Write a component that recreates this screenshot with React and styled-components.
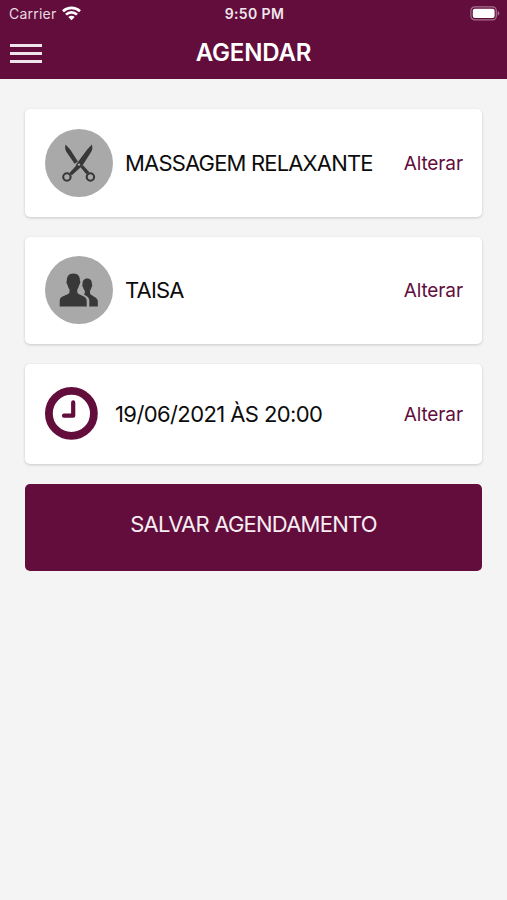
import React from 'react';
import styled, { createGlobalStyle } from 'styled-components';

const GlobalStyle = createGlobalStyle`
  body {
    margin: 0;
    background: #f4f4f4;
    font-family: Inter, 'Liberation Sans', sans-serif;
  }
`;

const Screen = styled.div`
  min-height: 100vh;
  background: #f4f4f4;
`;

const Header = styled.header`
  height: 79px;
  background: #620d3c;
  color: #fff;
`;

const StatusBar = styled.div`
  display: grid;
  grid-template-columns: 1fr auto 1fr;
  align-items: center;
  box-sizing: border-box;
  height: 27px;
  padding: 0 7px 0 9px;
  font-size: 14px;
  line-height: 27px;
`;

const Carrier = styled.div`
  display: flex;
  align-items: center;
  gap: 6px;
  color: #e8d9e1;
  letter-spacing: 0.22px;
`;

const Time = styled.div`
  font-size: 14px;
  font-weight: 600;
  color: #f1e6ec;
  letter-spacing: 0.4px;
`;

const Battery = styled.div`
  display: flex;
  justify-content: flex-end;
`;

const NavBar = styled.div`
  display: grid;
  grid-template-columns: 1fr auto 1fr;
  align-items: center;
  height: 52px;
  padding: 0 10px;
`;

const MenuButton = styled.button`
  display: flex;
  flex-direction: column;
  gap: 5px;
  width: 32px;
  padding: 0;
  border: 0;
  background: none;
`;

const MenuLine = styled.span`
  height: 3px;
  background: #f0e4eb;
`;

const Title = styled.h1`
  margin: 0;
  font-size: 24px;
  font-weight: 600;
  line-height: 30px;
  letter-spacing: -0.15px;
`;

const Content = styled.main`
  display: flex;
  flex-direction: column;
  gap: 19.5px;
  padding: 30px 25px;
`;

const Card = styled.section`
  display: flex;
  align-items: center;
  box-sizing: border-box;
  height: ${(props) => props.$height}px;
  padding: 0 19px 0 20px;
  border-radius: 5px;
  background: #fff;
  box-shadow: 0 1px 3px rgba(0, 0, 0, 0.18);
`;

const Avatar = styled.div`
  width: 68px;
  height: 68px;
  border-radius: 50%;
  background: #a9a9a9;
`;

const Label = styled.div`
  flex: 1;
  margin-left: ${(props) => props.$gap}px;
  font-size: 22px;
  line-height: 28px;
  letter-spacing: ${(props) => props.$spacing}px;
  white-space: nowrap;
  color: #0c0c0c;
`;

const ChangeLink = styled.button`
  padding: 2px 0 0;
  border: 0;
  background: none;
  font-family: inherit;
  font-size: 19px;
  line-height: 24px;
  letter-spacing: -0.1px;
  color: #620d3c;
`;

const SaveButton = styled.button`
  height: 87px;
  padding: 0 0 7px;
  border: 0;
  border-radius: 5px;
  background: #620d3c;
  font-family: inherit;
  font-size: 22px;
  letter-spacing: -0.77px;
  color: #f7edf3;
`;

const Icon = styled.svg`
  display: block;
  flex: none;
`;

const WifiIcon = () => (
  <Icon width="19" height="15" viewBox="0 0 19 15" fill="none" stroke="#fff" strokeWidth="2.7">
    <path d="M1 5.2C5.8 .8 13.2 .8 18 5.2" />
    <path d="M4 8.6C7.1 5.6 11.9 5.6 15 8.6" />
    <path d="M6.3 11C8.1 9.3 10.9 9.3 12.7 11L9.5 14.2Z" fill="#fff" stroke="none" />
  </Icon>
);

const BatteryIcon = () => (
  <Icon width="30" height="15" viewBox="0 0 30 15">
    <rect x="0.9" y="0.9" width="25.4" height="13" rx="3.8" fill="none" stroke="#a5718c" strokeWidth="1.2" />
    <rect x="2.8" y="2.7" width="21.8" height="9.4" rx="2" fill="#fff" />
    <path d="M27.7 5.1c2.2 .8 2.2 3.8 0 4.6z" fill="#a5718c" />
  </Icon>
);

const ScissorsIcon = () => (
  <Icon width="68" height="68" viewBox="0 0 68 68">
    <path d="M20.5 15.5C19.9 18.2 20 20.6 21.3 22.7L29.6 34.8L32.9 32.4L25.2 20.6Z" fill="#383838" />
    <path d="M35.6 38.2L38 36.2L44.4 43.3L41.4 45.3Z" fill="#383838" />
    <path d="M46.9 15.5C47.7 18.6 47.5 20.6 46.1 22.9L37.2 37L34.6 39.2L26.8 46.2L24.4 44L30.6 37.2L31.8 34.4L42.2 20.6Z" fill="#383838" />
    <circle cx="21.9" cy="48" r="3.7" fill="none" stroke="#383838" strokeWidth="2.1" />
    <circle cx="45.4" cy="48" r="3.7" fill="none" stroke="#383838" strokeWidth="2.1" />
    <circle cx="34" cy="35.6" r="1.2" fill="#a9a9a9" />
  </Icon>
);

const PeopleIcon = () => (
  <Icon width="68" height="68" viewBox="0 0 68 68" fill="#383838">
    <path d="M28.4 17.5C32.8 17.5 35.1 20.3 34.9 24.6C35.6 25 35.2 28.4 34.2 29C33.7 31.3 32.8 32.5 32.3 33.5V36.5C33.2 39.4 41.7 39.4 41.7 44.4V50.6H14.7V44.4C14.7 39.4 23.6 39.4 24.5 36.5V33.5C23.9 32.5 23 31.3 22.6 29C21.5 28.4 21.2 25 21.9 24.6C21.7 20.3 24 17.5 28.4 17.5Z" />
    <path d="M42.2 22.4C45.5 22.4 47.1 24.7 46.9 28C47.5 28.4 47.2 31 46.4 31.4C46 33.2 45.5 34.1 45 34.8V37.6C45.7 40 52.8 41 52.8 45.2V50.6H44.3V44.6C44.3 41.4 41.8 39.9 38.8 38.4C39.5 37.9 39.8 37.4 39.8 36.7V34.8C39.2 34.1 38.6 33.2 38.2 31.4C37.3 31 37 28.4 37.6 28C37.4 24.7 39 22.4 42.2 22.4Z" />
  </Icon>
);

const ClockIcon = () => (
  <Icon width="53" height="53" viewBox="0 0 53 53" fill="none" stroke="#620d3c">
    <circle cx="26.4" cy="26.4" r="22.5" strokeWidth="7.8" />
    <path d="M28.2 15.4V28.7H19" strokeWidth="4.2" strokeLinecap="round" strokeLinejoin="round" />
  </Icon>
);

const App = () => {
  return (
    <Screen>
      <GlobalStyle />
      <Header>
        <StatusBar>
          <Carrier>
            Carrier
            <WifiIcon />
          </Carrier>
          <Time>9:50 PM</Time>
          <Battery>
            <BatteryIcon />
          </Battery>
        </StatusBar>
        <NavBar>
          <MenuButton aria-label="Menu">
            <MenuLine />
            <MenuLine />
            <MenuLine />
          </MenuButton>
          <Title>AGENDAR</Title>
        </NavBar>
      </Header>
      <Content>
        <Card $height={108}>
          <Avatar>
            <ScissorsIcon />
          </Avatar>
          <Label $gap={12} $spacing={-0.83}>MASSAGEM RELAXANTE</Label>
          <ChangeLink>Alterar</ChangeLink>
        </Card>
        <Card $height={107.5}>
          <Avatar>
            <PeopleIcon />
          </Avatar>
          <Label $gap={12} $spacing={-0.8}>TAISA</Label>
          <ChangeLink>Alterar</ChangeLink>
        </Card>
        <Card $height={100.5}>
          <ClockIcon />
          <Label $gap={17} $spacing={-0.6}>19/06/2021 ÀS 20:00</Label>
          <ChangeLink>Alterar</ChangeLink>
        </Card>
        <SaveButton>SALVAR AGENDAMENTO</SaveButton>
      </Content>
    </Screen>
  );
};

export default App;
